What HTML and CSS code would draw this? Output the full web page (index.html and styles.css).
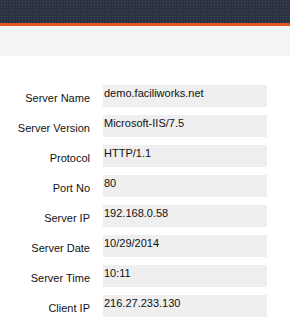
FILE: index.html
```html
<!DOCTYPE html>
<html lang="en">

<head>
    <meta charset="UTF-8">
    <meta name="viewport" content="width=device-width, initial-scale=1.0">
    <title>Server Info</title>
    <link rel="stylesheet" href="styles.css">
</head>

<body>
    <div class="header"></div>
    <div class="subbar"></div>
    <div class="info">
        <div class="label">Server Name</div>
        <div class="value">demo.faciliworks.net</div>
        <div class="label">Server Version</div>
        <div class="value">Microsoft-IIS/7.5</div>
        <div class="label">Protocol</div>
        <div class="value">HTTP/1.1</div>
        <div class="label">Port No</div>
        <div class="value">80</div>
        <div class="label">Server IP</div>
        <div class="value">192.168.0.58</div>
        <div class="label">Server Date</div>
        <div class="value">10/29/2014</div>
        <div class="label">Server Time</div>
        <div class="value">10:11</div>
        <div class="label">Client IP</div>
        <div class="value">216.27.233.130</div>
    </div>
</body>

</html>
```

FILE: styles.css
```css
body {
    font-family: "Liberation Sans", Arial, sans-serif;
    font-size: 11px;
    color: #111;
    background: #fff;
    margin: 0;
}

.header {
    height: 23px;
    background-color: #2b3242;
    background-image: radial-gradient(circle, #3b4a55 0.8px, transparent 1px);
    background-size: 3px 3px;
    border-bottom: 3px solid #e4561d;
}

.subbar {
    height: 30px;
    background: #f4f4f4;
}

.info {
    display: grid;
    grid-template-columns: 90px 164px;
    column-gap: 13px;
    row-gap: 8px;
    margin-top: 29px;
}

.label {
    text-align: right;
    line-height: 13px;
    padding-top: 7px;
}

.value {
    box-sizing: border-box;
    height: 22px;
    line-height: 13px;
    padding: 2px 0 0 1px;
    background: #efefef;
}
```
